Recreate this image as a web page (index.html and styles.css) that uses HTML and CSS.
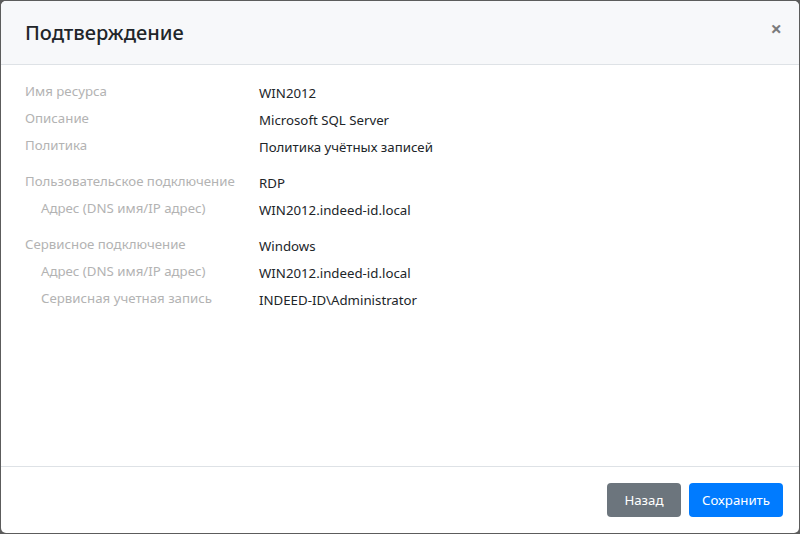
FILE: index.html
```html
<!DOCTYPE html>
<html lang="ru">
<head>
    <meta charset="UTF-8">
    <meta name="viewport" content="width=device-width, initial-scale=1.0">
    <title>Подтверждение</title>
    <link rel="stylesheet" href="styles.css">
</head>
<body>
    <div class="modal">
        <div class="modal-header">
            <h5 class="modal-title">Подтверждение</h5>
            <button class="close" type="button">&times;</button>
        </div>

        <div class="modal-body">
            <div class="group">
                <div class="row"><div class="label">Имя ресурса</div><div class="value">WIN2012</div></div>
                <div class="row"><div class="label">Описание</div><div class="value">Microsoft SQL Server</div></div>
                <div class="row"><div class="label">Политика</div><div class="value">Политика учётных записей</div></div>
            </div>
            <div class="group">
                <div class="row"><div class="label">Пользовательское подключение</div><div class="value">RDP</div></div>
                <div class="row sub"><div class="label">Адрес (DNS имя/IP адрес)</div><div class="value">WIN2012.indeed-id.local</div></div>
            </div>
            <div class="group">
                <div class="row"><div class="label">Сервисное подключение</div><div class="value">Windows</div></div>
                <div class="row sub"><div class="label">Адрес (DNS имя/IP адрес)</div><div class="value">WIN2012.indeed-id.local</div></div>
                <div class="row sub"><div class="label">Сервисная учетная запись</div><div class="value">INDEED-ID\Administrator</div></div>
            </div>
        </div>

        <div class="modal-footer">
            <button class="btn btn-secondary" type="button">Назад</button>
            <button class="btn btn-primary" type="button">Сохранить</button>
        </div>
    </div>
</body>
</html>
```

FILE: styles.css
```css
html, body {
    height: 100%;
}
body {
    margin: 0;
    padding: 1px;
    box-sizing: border-box;
    background-color: #5c5c5c;
    font-family: "Noto Sans", "Open Sans", sans-serif;
    font-size: 13.25px;
    line-height: 21px;
    color: #212529;
}
.modal {
    height: 100%;
    display: flex;
    flex-direction: column;
    background-color: #fff;
    border-radius: 5px;
    overflow: hidden;
}
.modal-header {
    display: flex;
    align-items: center;
    justify-content: space-between;
    padding: 17px 13px 16px 24px;
    background-color: #f7f8fa;
    border-bottom: 1px solid #dee2e6;
}
.modal-title {
    margin: 0;
    font-size: 20px;
    line-height: 30px;
    font-weight: 500;
}
.close {
    align-self: flex-start;
    margin-top: -4px;
    background: none;
    border: none;
    padding: 0 4px;
    font-family: "Noto Sans", sans-serif;
    font-size: 20px;
    font-weight: bold;
    line-height: 30px;
    color: #000;
    opacity: 0.5;
    cursor: pointer;
}
.modal-body {
    flex: 1;
    padding: 16px 24px;
}
.group {
    margin-bottom: 13px;
}
.row {
    display: grid;
    grid-template-columns: 234px 1fr;
    margin-bottom: 4px;
}
.label {
    color: #b3b3b3;
}
.value {
    padding-top: 2px;
}
.sub .label {
    padding-left: 16px;
}
.modal-footer {
    display: flex;
    justify-content: flex-end;
    gap: 8px;
    padding: 16px;
    border-top: 1px solid #dee2e6;
}
.btn {
    font-family: inherit;
    font-size: 13.25px;
    line-height: 20px;
    padding: 6px 16.5px;
    border: 1px solid transparent;
    border-radius: 4px;
    color: #fff;
    cursor: pointer;
}
.btn-secondary {
    background-color: #6c757d;
}
.btn-primary {
    background-color: #007bff;
    padding: 6px 12px;
}
```
